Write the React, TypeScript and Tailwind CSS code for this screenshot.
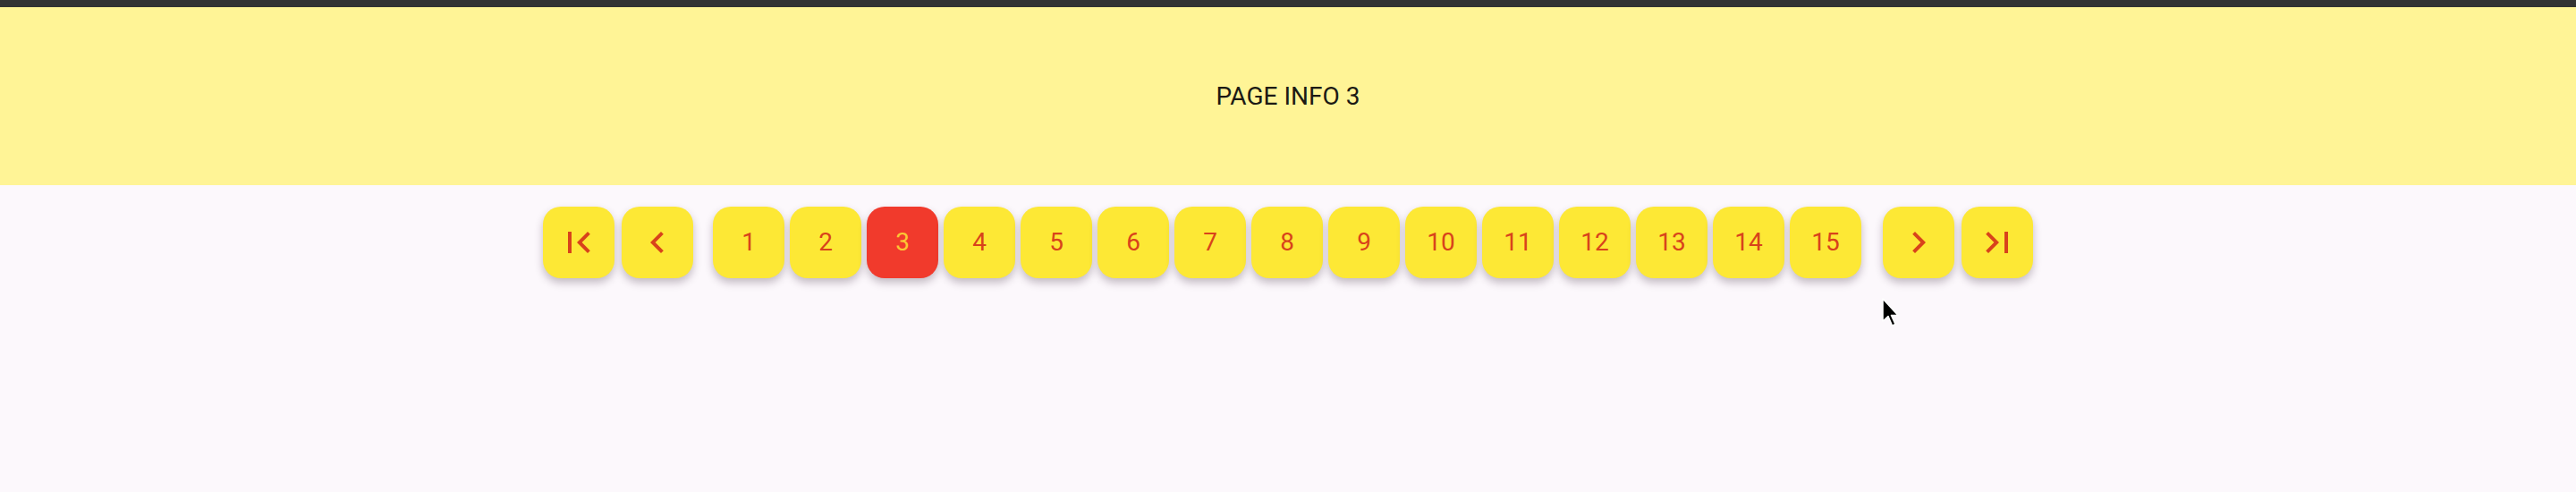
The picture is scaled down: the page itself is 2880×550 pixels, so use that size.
import React from "react";

/* Material icon paths, 24x24 viewBox */
const ICONS: Record<string, string> = {
    first: "M18.41 16.59L13.82 12l4.59-4.59L17 6l-6 6 6 6zM6 6h2v12H6z",
    prev: "M15.41 7.41L14 6l-6 6 6 6 1.41-1.41L10.83 12z",
    next: "M10 6L8.59 7.41 13.17 12l-4.58 4.59L10 18l6-6z",
    last: "M5.59 7.41L10.18 12l-4.59 4.59L7 18l6-6-6-6zM16 6h2v12h-2z",
};

function NavButton({ icon, label }: { icon: string; label: string }) {
    return (
        <button
            type="button"
            aria-label={label}
            className="flex h-[80px] w-[80px] items-center justify-center rounded-[20px] bg-[#fde835] shadow-[0_5px_10px_rgba(50,30,50,0.28)]"
        >
            <svg width="48" height="48" viewBox="0 0 24 24" aria-hidden="true">
                <path d={ICONS[icon]} fill="#d8431b" />
            </svg>
        </button>
    );
}

function PageButton({ n, active }: { n: number; active: boolean }) {
    return (
        <button
            type="button"
            aria-current={active ? "page" : undefined}
            className={`flex h-[80px] w-[80px] items-center justify-center rounded-[20px] text-[28px] leading-none shadow-[0_5px_10px_rgba(50,30,50,0.28)] ${
                active ? "bg-[#f13a2c] text-[#fcc634]" : "bg-[#fde835] text-[#d8431b]"
            }`}
        >
            {n}
        </button>
    );
}

export default function App() {
    const current = 3;
    const pages = Array.from({ length: 15 }, (_, i) => i + 1);

    return (
        <div
            className="relative min-h-[550px] bg-[#fcf8fc]"
            style={{ fontFamily: "Roboto, 'Noto Sans', sans-serif" }}
        >
            {/* app bar edge */}
            <div className="h-[8px] bg-[#333333]" />

            {/* page content */}
            <div className="flex h-[199px] items-center justify-center bg-[#fff496] text-[28px] text-[#1c1a14]">
                PAGE INFO {current}
            </div>

            {/* pager */}
            <div className="mt-[24px] flex justify-center">
                <div className="flex gap-[8px]">
                    <NavButton icon="first" label="First page" />
                    <NavButton icon="prev" label="Previous page" />
                </div>
                <div className="ml-[22px] flex gap-[6px]">
                    {pages.map((n) => (
                        <PageButton key={n} n={n} active={n === current} />
                    ))}
                </div>
                <div className="ml-[24px] flex gap-[8px]">
                    <NavButton icon="next" label="Next page" />
                    <NavButton icon="last" label="Last page" />
                </div>
            </div>

            {/* mouse pointer */}
            <svg
                className="absolute left-[2104px] top-[333px]"
                width="20"
                height="33"
                viewBox="0 0 20 33"
                aria-hidden="true"
            >
                <path
                    d="M1 1 L1 26 L7 20.5 L11.5 31 L15 29.5 L10.5 19.5 L18 19.5 Z"
                    fill="#000"
                    stroke="#fff"
                    strokeWidth="1.5"
                    strokeLinejoin="round"
                />
            </svg>
        </div>
    );
}
